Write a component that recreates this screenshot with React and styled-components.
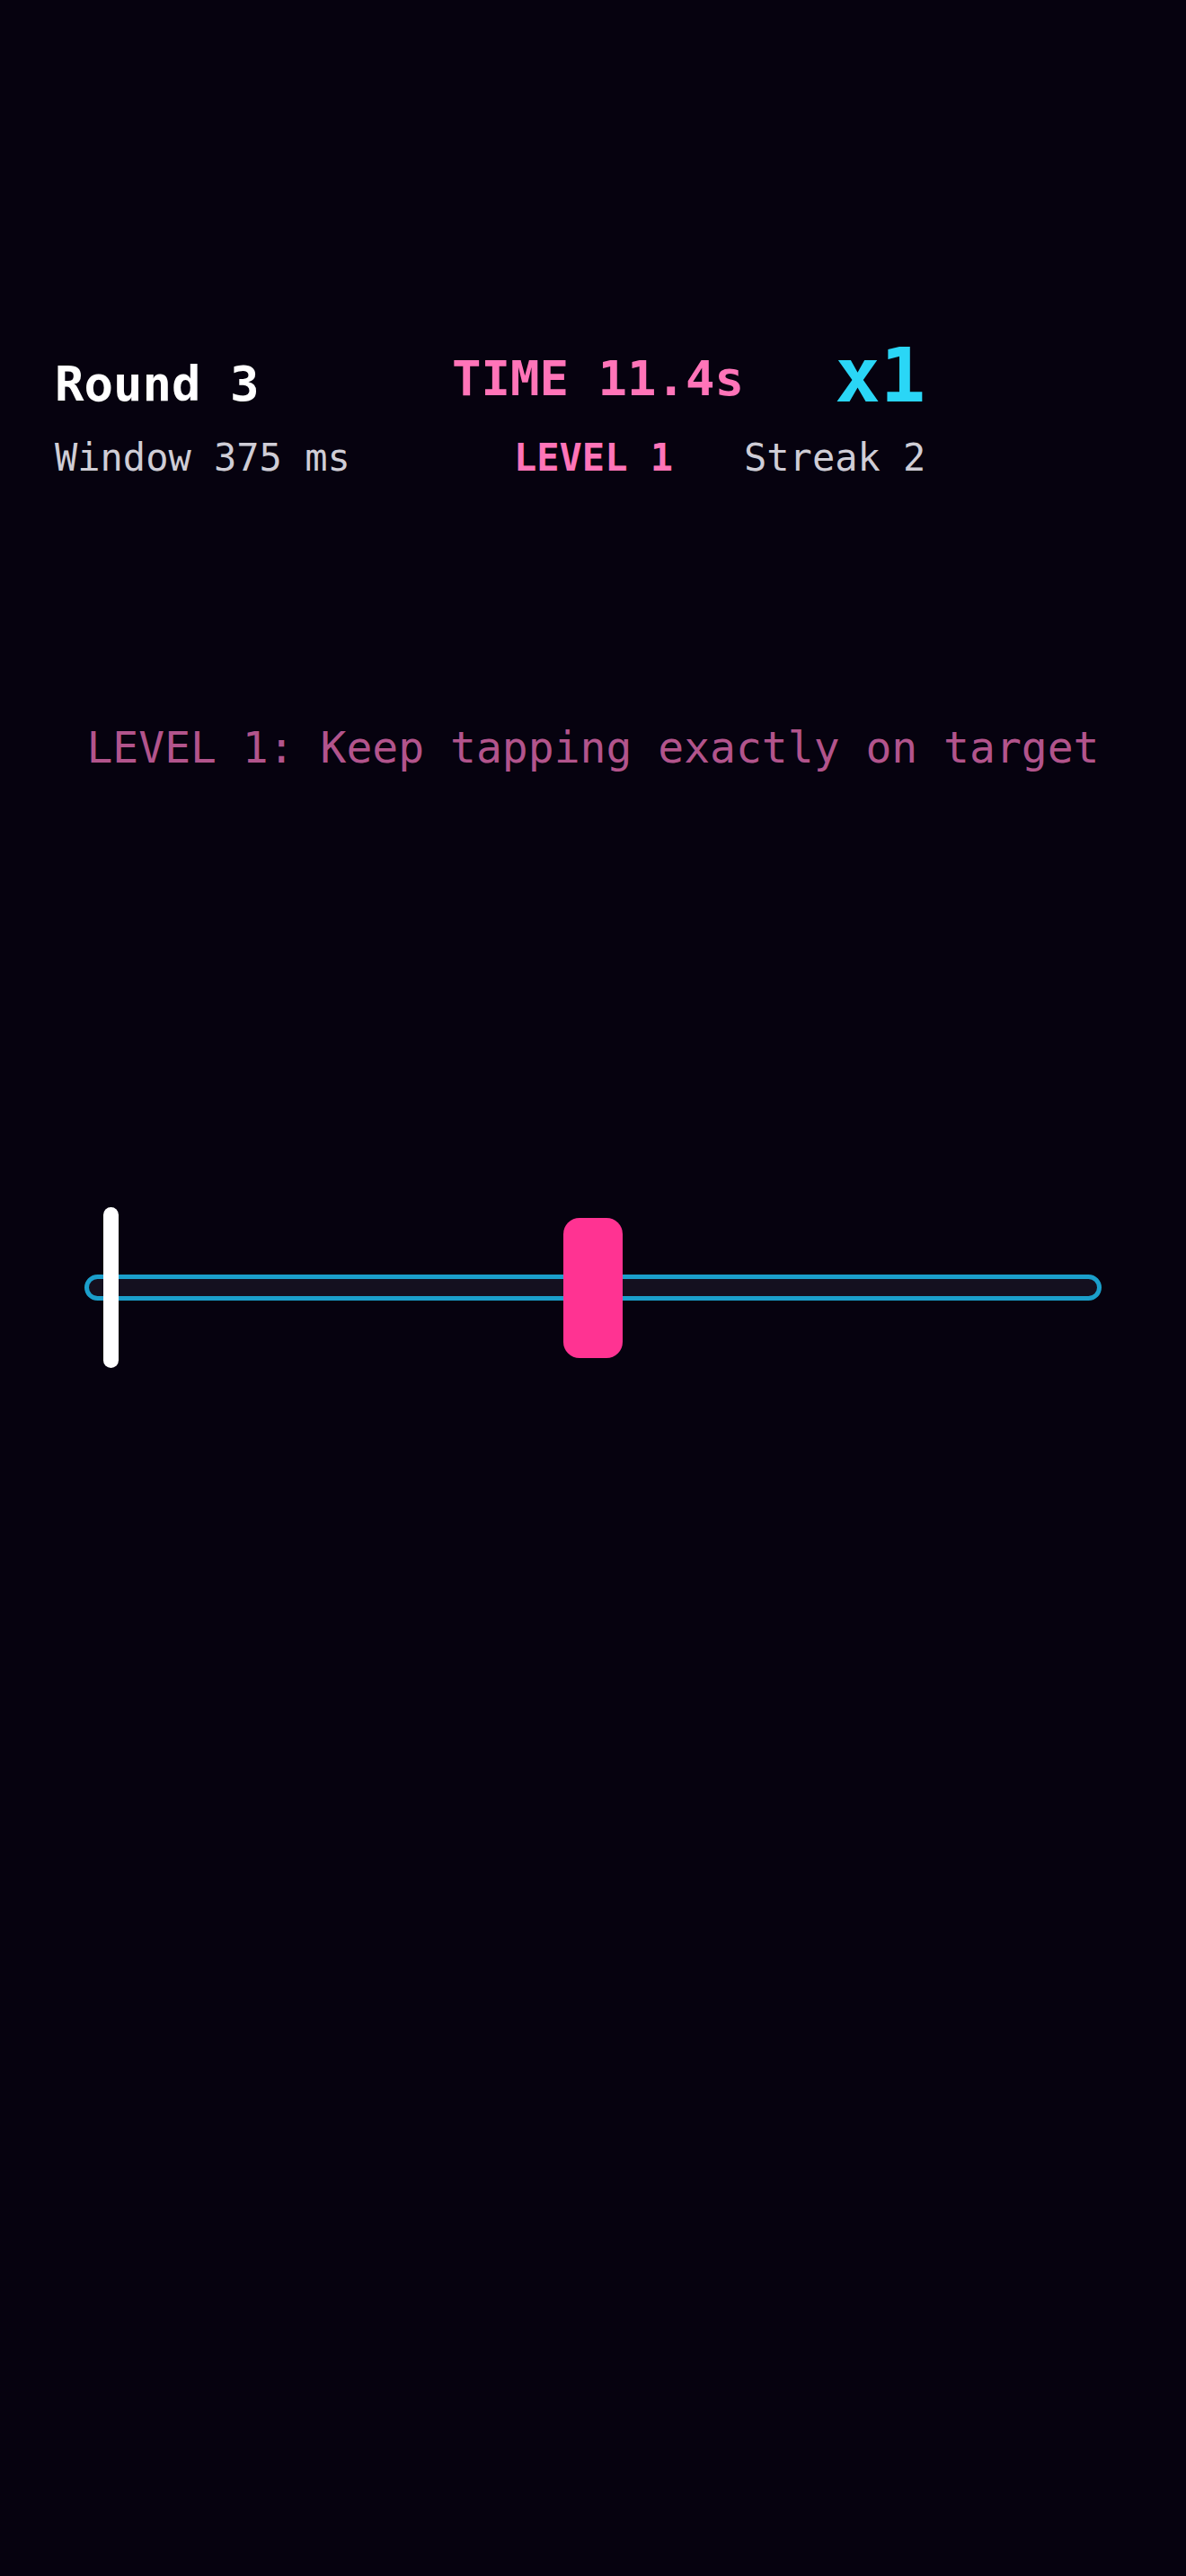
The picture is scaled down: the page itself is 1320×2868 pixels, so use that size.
import React from 'react';
import styled, { createGlobalStyle } from 'styled-components';

const GlobalStyle = createGlobalStyle`
  html, body {
    margin: 0;
    padding: 0;
    background: #06020f;
  }
  body {
    font-family: "DejaVu Sans Mono", "Liberation Mono", monospace;
  }
`;

const Screen = styled.div`
  width: 1320px;
  min-height: 2868px;
  background: #06020f;
  display: flex;
  flex-direction: column;
  padding-top: 396px;
  box-sizing: border-box;
`;

const Header = styled.div`
  display: grid;
  grid-template-columns: 1fr auto 1fr;
  padding: 0 60px 0 61px;
`;

const Stack = styled.div`
  display: flex;
  flex-direction: column;
  align-items: ${(p) => p.$align || 'flex-start'};
  justify-self: start;
  margin-left: ${(p) => p.$offset || 0}px;
`;

const TopLine = styled.div`
  height: 64px;
  padding-left: ${(p) => p.$nudge || 0}px;
  font-size: ${(p) => p.$size}px;
  line-height: ${(p) => p.$lh}px;
  font-weight: bold;
  color: ${(p) => p.$color};
  white-space: nowrap;
`;

const SubLine = styled.div`
  margin-top: 25px;
  font-size: 42px;
  line-height: 50px;
  font-weight: ${(p) => (p.$bold ? 'bold' : 'normal')};
  color: ${(p) => p.$color || '#cfcdd6'};
  white-space: nowrap;
`;

const Hint = styled.div`
  margin-top: 267px;
  text-align: center;
  font-size: 48px;
  line-height: 60px;
  color: #b2548c;
`;

const TrackArea = styled.div`
  margin: 482px 94px 0;
  height: 179px;
  position: relative;
  display: flex;
  align-items: center;
`;

const Track = styled.div`
  width: 100%;
  height: 29px;
  box-sizing: border-box;
  border: 5px solid #1b9fcb;
  border-radius: 15px;
  background: #14101f;
`;

const Cursor = styled.div`
  position: absolute;
  top: 0;
  left: 21px;
  width: 17px;
  height: 179px;
  border-radius: 9px;
  background: #ffffff;
`;

const Target = styled.div`
  position: absolute;
  top: 12px;
  left: 50%;
  transform: translateX(-50%);
  width: 66px;
  height: 156px;
  border-radius: 18px;
  background: #ff3392;
`;

export default function App() {
  return (
    <Screen>
      <GlobalStyle />
      <Header>
        <Stack>
          <TopLine $size={54} $lh={64} $color="#ffffff">Round 3</TopLine>
          <SubLine>Window 375 ms</SubLine>
        </Stack>
        <Stack $align="center">
          <TopLine $size={54} $lh={52} $nudge={10} $color="#ff74b8">TIME 11.4s</TopLine>
          <SubLine $bold $color="#ff74b8">LEVEL 1</SubLine>
        </Stack>
        <Stack $align="flex-end">
          <TopLine $size={84} $lh={44} $color="#2ad6f6">x1</TopLine>
          <SubLine>Streak 2</SubLine>
        </Stack>
      </Header>
      <Hint>LEVEL 1: Keep tapping exactly on target</Hint>
      <TrackArea>
        <Track />
        <Cursor />
        <Target />
      </TrackArea>
    </Screen>
  );
}
